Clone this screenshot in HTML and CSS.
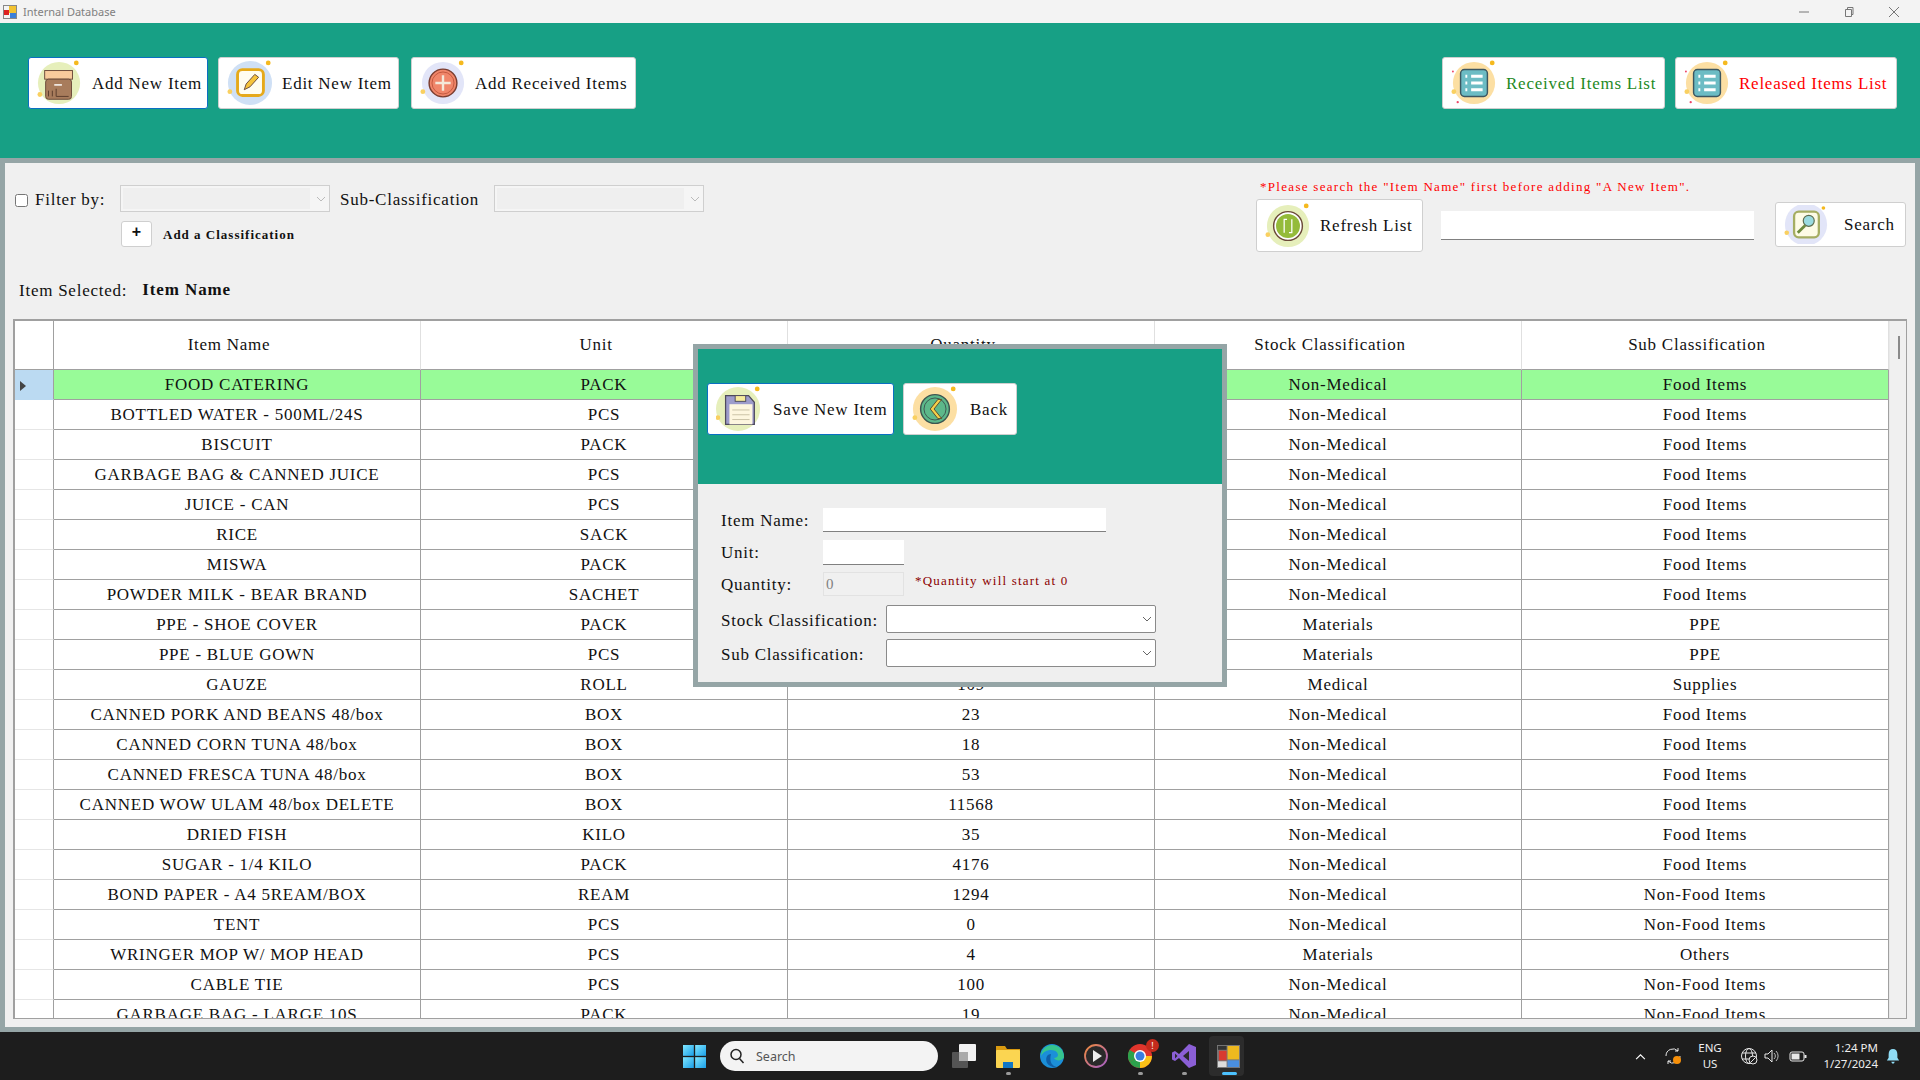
FILE: index.html
```html
<!DOCTYPE html>
<html lang="en">
<head>
<meta charset="utf-8">
<title>Internal Database</title>
<link rel="stylesheet" href="styles.css">
</head>
<body>
<div class="titlebar">
  <div class="title-left">
    <svg class="app-ico" viewBox="0 0 14 14"><rect x="0.5" y="0.5" width="13" height="13" fill="#f4f4f4" stroke="#888"/><rect x="1" y="5" width="5" height="5" fill="#d22"/><rect x="6" y="1" width="7" height="7" fill="#f2c230"/><rect x="7" y="8" width="6" height="5" fill="#3b7fd8"/></svg>
    <span class="title-text">Internal Database</span>
  </div>
  <div class="win-controls">
    <svg class="win-ico" viewBox="0 0 12 12"><path d="M1 6h10" stroke="#777" fill="none"/></svg>
    <svg class="win-ico" viewBox="0 0 12 12"><path d="M2.500 3.500h6v7h-6zM4.500 3.500v-2h5.500v7h-1.500" stroke="#777" fill="none"/></svg>
    <svg class="win-ico" viewBox="0 0 12 12"><path d="M1 1l10 10M11 1L1 11" stroke="#777" fill="none"/></svg>
  </div>
</div>

<header class="topbar">
  <div class="btn-group">
    <button class="btn btn-focus w-add"><svg class="ico" viewBox="0 0 48 48"><circle cx="23" cy="24" r="22" fill="#e6efbb"/><circle cx="41" cy="3" r="2.500" fill="#f5b91e"/><circle cx="3" cy="36" r="2.500" fill="#f9d061"/><rect x="8" y="11" width="29" height="9" fill="#f8cb9c" stroke="#6b4a3a"/><rect x="9" y="20" width="27" height="21" rx="3" fill="#a87c5c" stroke="#6b4a3a"/><path d="M18 26h8" stroke="#fff" stroke-width="1.500"/><path d="M12 38v-6M16 38v-6M20 30v8h13" stroke="#5b3d2c" fill="none"/></svg><span class="btn-label">Add New Item</span></button>
    <button class="btn w-edit"><svg class="ico" viewBox="0 0 48 48"><circle cx="24" cy="24" r="23" fill="#cfe0f5"/><circle cx="43" cy="3" r="2.500" fill="#f5b91e"/><circle cx="3" cy="33" r="2.500" fill="#f9d061"/><rect x="11" y="10" width="27" height="27" rx="5" fill="#fffdf0" stroke="#e6a91a" stroke-width="3"/><path d="M18 31l2-6 9-10 4 3-9 10z" fill="#f5c33b" stroke="#6b4a3a"/></svg><span class="btn-label">Edit New Item</span></button>
    <button class="btn w-recv"><svg class="ico" viewBox="0 0 48 48"><circle cx="24" cy="24" r="22" fill="#e2e5f8"/><circle cx="43" cy="3" r="2.500" fill="#f5b91e"/><circle cx="3" cy="33" r="2.500" fill="#f9d061"/><circle cx="24" cy="24" r="14.500" fill="#f0866a" stroke="#7a3d30" stroke-width="1.500"/><circle cx="24" cy="24" r="11.500" fill="none" stroke="#c2583f"/><path d="M24 16v16M16 24h16" stroke="#f4e8d8" stroke-width="2.500"/></svg><span class="btn-label">Add Received Items</span></button>
  </div>
  <div class="btn-group">
    <button class="btn w-rlist"><svg class="ico" viewBox="0 0 48 48"><circle cx="24" cy="24" r="22" fill="#fcdfa3"/><circle cx="43" cy="3" r="2.500" fill="#f5b91e"/><circle cx="3" cy="33" r="2.500" fill="#f9d061"/><circle cx="2" cy="12" r="1" fill="#ee4466"/><circle cx="7" cy="44" r="1.200" fill="#ee4466"/><rect x="10" y="10" width="28" height="28" rx="4" fill="#6cbcc4" stroke="#3c5660" stroke-width="1.500"/><path d="M21 17h12M21 24h12M21 31h12" stroke="#fff" stroke-width="3"/><path d="M15 17h2M15 24h2M15 31h2" stroke="#fff" stroke-width="3"/></svg><span class="btn-label txt-green">Received Items List</span></button>
    <button class="btn w-rel"><svg class="ico" viewBox="0 0 48 48"><circle cx="24" cy="24" r="22" fill="#fcdfa3"/><circle cx="43" cy="3" r="2.500" fill="#f5b91e"/><circle cx="3" cy="33" r="2.500" fill="#f9d061"/><circle cx="2" cy="12" r="1" fill="#ee4466"/><circle cx="7" cy="44" r="1.200" fill="#ee4466"/><rect x="10" y="10" width="28" height="28" rx="4" fill="#6cbcc4" stroke="#3c5660" stroke-width="1.500"/><path d="M21 17h12M21 24h12M21 31h12" stroke="#fff" stroke-width="3"/><path d="M15 17h2M15 24h2M15 31h2" stroke="#fff" stroke-width="3"/></svg><span class="btn-label txt-red">Released Items List</span></button>
  </div>
</header>

<main class="main">
  <section class="filters">
    <div class="filter-left">
      <div class="filter-row">
        <input type="checkbox" class="chk">
        <span class="lbl lbl-filter">Filter by:</span>
        <div class="combo combo-off"><span class="combo-fill"></span><svg class="chev" viewBox="0 0 10 6"><path d="M1 1l4 4 4-4" stroke="#bbb" fill="none"/></svg></div>
        <span class="lbl lbl-sub">Sub-Classification</span>
        <div class="combo combo-off"><span class="combo-fill"></span><svg class="chev" viewBox="0 0 10 6"><path d="M1 1l4 4 4-4" stroke="#bbb" fill="none"/></svg></div>
      </div>
      <div class="class-row">
        <button class="plus-btn">+</button>
        <span class="add-class">Add a Classification</span>
      </div>
      <div class="selected-row">
        <span class="lbl">Item Selected:</span>
        <strong class="selected-name">Item Name</strong>
      </div>
    </div>
    <div class="filter-right">
      <p class="note">*Please search the "Item Name" first before adding "A New Item".</p>
      <div class="search-row">
        <button class="btn w-refresh"><svg class="ico" viewBox="0 0 48 48"><circle cx="24" cy="24" r="22" fill="#e6efbb"/><circle cx="43" cy="3" r="2.500" fill="#f5b91e"/><circle cx="3" cy="33" r="2.500" fill="#f9d061"/><circle cx="24" cy="24" r="15" fill="#fff" stroke="#6b4a3a" stroke-width="1.500"/><circle cx="24" cy="24" r="12.500" fill="#94bb3a"/><path d="M20 31v-14h3M28 17v14h-3" stroke="#fff" fill="none" stroke-width="1.300"/></svg><span class="btn-label">Refresh List</span></button>
        <div class="txt-input search-input"></div>
        <button class="btn w-search"><svg class="ico ico-s" viewBox="0 0 48 48" preserveAspectRatio="xMidYMid slice"><circle cx="24" cy="24" r="23" fill="#e2e5f8"/><circle cx="43" cy="6" r="2" fill="#f5b91e"/><circle cx="3" cy="33" r="2.500" fill="#f9d061"/><rect x="11" y="10" width="27" height="28" rx="5" fill="#fdfbe6" stroke="#a5ad62" stroke-width="2.500"/><circle cx="27" cy="20" r="6" fill="#9adbe0" stroke="#5d6d50" stroke-width="1.300"/><path d="M23 25l-8 8" stroke="#6d8a3c" stroke-width="3"/></svg><span class="btn-label">Search</span></button>
      </div>
    </div>
  </section>

  <section class="grid">
    <div class="grid-body">
      <table class="tbl">
        <colgroup><col class="c0"><col class="c1"><col class="c1"><col class="c1"><col class="c1"><col class="c1"></colgroup>
        <thead><tr><th class="rh"></th><th>Item Name</th><th>Unit</th><th>Quantity</th><th>Stock Classification</th><th>Sub Classification</th></tr></thead>
        <tbody>
          <tr class="sel"><td class="rh rh-sel"><span class="arrow"></span></td><td>FOOD CATERING</td><td>PACK</td><td></td><td>Non-Medical</td><td>Food Items</td></tr>
          <tr><td class="rh"></td><td>BOTTLED WATER - 500ML/24S</td><td>PCS</td><td></td><td>Non-Medical</td><td>Food Items</td></tr>
          <tr><td class="rh"></td><td>BISCUIT</td><td>PACK</td><td></td><td>Non-Medical</td><td>Food Items</td></tr>
          <tr><td class="rh"></td><td>GARBAGE BAG &amp; CANNED JUICE</td><td>PCS</td><td></td><td>Non-Medical</td><td>Food Items</td></tr>
          <tr><td class="rh"></td><td>JUICE - CAN</td><td>PCS</td><td></td><td>Non-Medical</td><td>Food Items</td></tr>
          <tr><td class="rh"></td><td>RICE</td><td>SACK</td><td></td><td>Non-Medical</td><td>Food Items</td></tr>
          <tr><td class="rh"></td><td>MISWA</td><td>PACK</td><td></td><td>Non-Medical</td><td>Food Items</td></tr>
          <tr><td class="rh"></td><td>POWDER MILK - BEAR BRAND</td><td>SACHET</td><td></td><td>Non-Medical</td><td>Food Items</td></tr>
          <tr><td class="rh"></td><td>PPE - SHOE COVER</td><td>PACK</td><td></td><td>Materials</td><td>PPE</td></tr>
          <tr><td class="rh"></td><td>PPE - BLUE GOWN</td><td>PCS</td><td></td><td>Materials</td><td>PPE</td></tr>
          <tr><td class="rh"></td><td>GAUZE</td><td>ROLL</td><td>109</td><td>Medical</td><td>Supplies</td></tr>
          <tr><td class="rh"></td><td>CANNED PORK AND BEANS 48/box</td><td>BOX</td><td>23</td><td>Non-Medical</td><td>Food Items</td></tr>
          <tr><td class="rh"></td><td>CANNED CORN TUNA 48/box</td><td>BOX</td><td>18</td><td>Non-Medical</td><td>Food Items</td></tr>
          <tr><td class="rh"></td><td>CANNED FRESCA TUNA 48/box</td><td>BOX</td><td>53</td><td>Non-Medical</td><td>Food Items</td></tr>
          <tr><td class="rh"></td><td>CANNED WOW ULAM 48/box DELETE</td><td>BOX</td><td>11568</td><td>Non-Medical</td><td>Food Items</td></tr>
          <tr><td class="rh"></td><td>DRIED FISH</td><td>KILO</td><td>35</td><td>Non-Medical</td><td>Food Items</td></tr>
          <tr><td class="rh"></td><td>SUGAR - 1/4 KILO</td><td>PACK</td><td>4176</td><td>Non-Medical</td><td>Food Items</td></tr>
          <tr><td class="rh"></td><td>BOND PAPER - A4 5REAM/BOX</td><td>REAM</td><td>1294</td><td>Non-Medical</td><td>Non-Food Items</td></tr>
          <tr><td class="rh"></td><td>TENT</td><td>PCS</td><td>0</td><td>Non-Medical</td><td>Non-Food Items</td></tr>
          <tr><td class="rh"></td><td>WRINGER MOP W/ MOP HEAD</td><td>PCS</td><td>4</td><td>Materials</td><td>Others</td></tr>
          <tr><td class="rh"></td><td>CABLE TIE</td><td>PCS</td><td>100</td><td>Non-Medical</td><td>Non-Food Items</td></tr>
          <tr><td class="rh"></td><td>GARBAGE BAG - LARGE 10S</td><td>PACK</td><td>19</td><td>Non-Medical</td><td>Non-Food Items</td></tr>
        </tbody>
      </table>
    </div>
    <div class="scrollbar"><span class="thumb"></span></div>
  </section>

  <div class="modal">
    <div class="modal-head">
      <button class="btn btn-focus w-save"><svg class="ico" viewBox="0 0 48 48"><circle cx="23" cy="24" r="23" fill="#e6efbb"/><circle cx="43" cy="3" r="2.500" fill="#f5b91e"/><circle cx="2" cy="33" r="2.500" fill="#f9d061"/><path d="M10 10h24l6 7v23H10z" fill="#9d9ccb" stroke="#4e4a5c" stroke-width="1.300"/><rect x="20" y="10" width="11" height="6" fill="#f6ec9c" stroke="#4e4a5c"/><rect x="14" y="19" width="24" height="21" fill="#fdf6df"/><path d="M17 25h18M17 30h18M17 35h18" stroke="#c9c0a5"/></svg><span class="btn-label">Save New Item</span></button>
      <button class="btn w-back"><svg class="ico" viewBox="0 0 48 48"><circle cx="24" cy="24" r="23" fill="#fcdfa3"/><circle cx="43" cy="3" r="2.500" fill="#f5b91e"/><circle cx="3" cy="33" r="2.500" fill="#f9d061"/><circle cx="24" cy="24" r="15" fill="#5cb88a" stroke="#3c5650" stroke-width="1.500"/><circle cx="24" cy="24" r="11.500" fill="none" stroke="#3c5650"/><path d="M27 14l-8 10 8 10h4l-8-10 8-10z" fill="#f5d04a" stroke="#5c4a2a"/></svg><span class="btn-label">Back</span></button>
    </div>
    <div class="form">
      <div class="f-row r-name"><span class="lbl f-lbl">Item Name:</span><div class="txt-input in-name"></div></div>
      <div class="f-row r-unit"><span class="lbl f-lbl">Unit:</span><div class="txt-input in-unit"></div></div>
      <div class="f-row r-qty"><span class="lbl f-lbl">Quantity:</span><div class="in-qty">0</div><span class="qty-note">*Quantity will start at 0</span></div>
      <div class="f-row r-stock"><span class="lbl f-lbl2">Stock Classification:</span><div class="combo-on"><svg class="chev" viewBox="0 0 10 6"><path d="M1 1l4 4 4-4" stroke="#666" fill="none"/></svg></div></div>
      <div class="f-row r-sub"><span class="lbl f-lbl2">Sub Classification:</span><div class="combo-on"><svg class="chev" viewBox="0 0 10 6"><path d="M1 1l4 4 4-4" stroke="#666" fill="none"/></svg></div></div>
    </div>
  </div>
</main>

<footer class="taskbar">
  <div class="task-center">
    <svg class="tb-start" viewBox="0 0 24 24"><defs><linearGradient id="wg" x1="0" y1="0" x2="1" y2="1"><stop offset="0" stop-color="#7fe6ff"/><stop offset="1" stop-color="#1a9fe8"/></linearGradient></defs><rect width="11.300" height="11.300" fill="url(#wg)"/><rect x="12.700" width="11.300" height="11.300" fill="url(#wg)"/><rect y="12.700" width="11.300" height="11.300" fill="url(#wg)"/><rect x="12.700" y="12.700" width="11.300" height="11.300" fill="url(#wg)"/></svg>
    <div class="tb-search"><svg class="tb-mag" viewBox="0 0 16 16"><circle cx="7" cy="6.500" r="5" fill="none" stroke="#222" stroke-width="1.500"/><path d="M10.500 10.500l4 4.500" stroke="#222" stroke-width="1.500"/></svg><span class="tb-search-txt">Search</span></div>
    <div class="tb-item"><svg class="tb-ico" viewBox="0 0 24 24"><rect x="0" y="8" width="16" height="16" rx="1" fill="#555"/><rect x="7" y="0" width="17" height="17" rx="1" fill="#f2f2f2"/><rect x="7" y="8" width="9" height="9" fill="#aaa"/></svg></div>
    <div class="tb-item"><svg class="tb-ico" viewBox="0 0 24 24"><path d="M0 2h9l2 3h13v4H0z" fill="#d99a10"/><rect y="6" width="24" height="18" rx="1" fill="#fbd551"/><rect x="7" y="18" width="10" height="6" fill="#1277c4"/></svg><i class="dot"></i></div>
    <div class="tb-item"><svg class="tb-ico" viewBox="0 0 24 24"><circle cx="12" cy="12" r="12" fill="#1b8fd8"/><path d="M24 13c0-7-5-12-12-12C6 1 1 6 1 12c2-4 6-6 10-6 5 0 7 3 7 5 0 2-2 3-4 3 1 2 4 3 7 2 2-1 3-2 3-3z" fill="#36c58e"/><path d="M11 10c-4 0-6 4-4 9 2 3 6 5 10 4-5-1-8-5-6-13z" fill="#0f5fa8"/></svg></div>
    <div class="tb-item"><svg class="tb-ico" viewBox="0 0 24 24"><defs><linearGradient id="pg" x1="0" y1="0" x2="1" y2="1"><stop offset="0" stop-color="#f08a3c"/><stop offset="1" stop-color="#a45ec8"/></linearGradient></defs><circle cx="12" cy="12" r="11" fill="#2a2a2a" stroke="url(#pg)" stroke-width="1.800"/><path d="M9 6l9 6-9 6z" fill="#eee"/></svg></div>
    <div class="tb-item"><svg class="tb-ico" viewBox="0 0 24 24"><circle cx="12" cy="12" r="12" fill="#e0352c"/><path d="M12 12L1.600 18A12 12 0 0 0 12 24z" fill="#2ca24c"/><path d="M12 12v12A12 12 0 0 0 24 12z" fill="#fbc117"/><path d="M1.600 6A12 12 0 0 0 1.600 18L12 12z" fill="#2ca24c"/><circle cx="12" cy="12" r="6" fill="#fff"/><circle cx="12" cy="12" r="4.500" fill="#3a7ee0"/></svg><i class="dot"></i><span class="badge">!</span></div>
    <div class="tb-item"><svg class="tb-ico" viewBox="0 0 24 24"><path d="M17 0l7 3v18l-7 3-10-10-4 3-3-1.500v-7L3 7l4 3z" fill="#8b5fd6"/><path d="M17 7v10l-6-5z" fill="#2a2a2a"/><path d="M3 9.500v5l2.500-2.500z" fill="#2a2a2a"/></svg><i class="dot"></i></div>
    <div class="tb-item tb-active"><svg class="tb-ico tb-app" viewBox="0 0 24 24"><rect width="24" height="24" fill="#777"/><rect x="1" y="1" width="9" height="4" fill="#333"/><rect x="2" y="6" width="8" height="10" fill="#d83a30"/><rect x="11" y="1" width="12" height="14" fill="#eeb91f"/><rect x="11" y="16" width="12" height="7" fill="#4a8fe0"/><rect x="1" y="17" width="9" height="6" fill="#ddd"/></svg><i class="dot dot-active"></i></div>
  </div>
  <div class="tray">
    <svg class="tr-chev" viewBox="0 0 12 8"><path d="M1 7l5-5 5 5" stroke="#fff" stroke-width="1.300" fill="none"/></svg>
    <div class="tr-sync"><svg viewBox="0 0 18 18" class="tr-ico"><path d="M2 9a7 7 0 0 1 12-5M16 9a7 7 0 0 1-12 5" stroke="#e8e8e8" fill="none"/><path d="M14 1v3h-3M4 17v-3h3" stroke="#e8e8e8" fill="none"/><circle cx="13" cy="13" r="4" fill="#f79009"/></svg></div>
    <div class="tr-lang"><span>ENG</span><span>US</span></div>
    <svg viewBox="0 0 18 18" class="tr-ico tr-globe"><circle cx="9" cy="9" r="7.500" fill="none" stroke="#e8e8e8"/><ellipse cx="9" cy="9" rx="3.500" ry="7.500" fill="none" stroke="#e8e8e8"/><path d="M2 6h14M2 12h14" stroke="#e8e8e8"/><circle cx="13" cy="13" r="4" fill="#1e1e1e" stroke="#e8e8e8"/><path d="M10.500 15.500l5-5" stroke="#e8e8e8"/></svg>
    <svg viewBox="0 0 18 18" class="tr-ico tr-vol"><path d="M2 7h3l4-4v12l-4-4H2z" fill="none" stroke="#e8e8e8"/><path d="M11 6a4 4 0 0 1 0 6M13 4a7 7 0 0 1 0 10" fill="none" stroke="#bbb"/></svg>
    <svg viewBox="0 0 18 18" class="tr-ico tr-bat"><rect x="1" y="5" width="14" height="9" rx="2" fill="none" stroke="#e8e8e8"/><rect x="2.500" y="6.500" width="8" height="6" fill="#e8e8e8"/><rect x="15.500" y="8" width="2" height="3" fill="#e8e8e8"/></svg>
    <div class="tr-clock"><span>1:24 PM</span><span>1/27/2024</span></div>
    <svg viewBox="0 0 16 18" class="tr-bell"><path d="M8 1c-3 0-5 2-5 6v4l-2 3h14l-2-3V7c0-4-2-6-5-6z" fill="#8fdcf5"/><path d="M6 15.500h4l-1 2H7z" fill="#8fdcf5"/></svg>
  </div>
</footer>
</body>
</html>
```

FILE: styles.css
```css
* { box-sizing: border-box; }
html, body { margin: 0; padding: 0; }
body {
  width: 1920px;
  height: 1080px;
  overflow: hidden;
  display: flex;
  flex-direction: column;
  font-family: "Liberation Serif", serif;
  font-size: 17px;
  letter-spacing: 0.75px;
  color: #111;
  background: #f0f0f0;
  position: relative;
}

/* title bar */
.titlebar { height: 23px; flex: none; background: #f3f3f3; display: flex; justify-content: space-between; align-items: center; }
.title-left { display: flex; align-items: center; padding-left: 3px; }
.app-ico { width: 14px; height: 14px; }
.title-text { font-family: "Noto Sans", sans-serif; font-size: 11px; letter-spacing: 0; color: #808080; margin-left: 6px; }
.win-controls { display: flex; gap: 33px; padding-right: 20px; }
.win-ico { width: 12px; height: 12px; display: block; }

/* top teal bar */
.topbar { height: 135px; flex: none; background: #17a085; padding: 34px 23px 0 28px; display: flex; justify-content: space-between; align-items: flex-start; }
.btn-group { display: flex; gap: 10px; }
.btn {
  height: 52px; flex: none; display: flex; align-items: center; padding: 0 0 0 8px;
  background: #fff; border: 1px solid #cfcfcf; border-radius: 3px;
  font: inherit; letter-spacing: inherit; color: #111;
}
.btn-focus { border-color: #0a6fc2; }
.ico { width: 46px; height: 46px; flex: none; display: block; }
.ico-s { width: 44px; height: 39px; }
.btn-label { white-space: nowrap; margin-left: 9px; padding-top: 2px; }
.txt-green { color: #1f8a1f; }
.txt-red { color: #f00; }
.w-add { width: 180px; }
.w-edit { width: 181px; }
.w-recv { width: 225px; margin-left: 2px; }
.w-rlist { width: 223px; }
.w-rel { width: 222px; }
.w-save { width: 187px; }
.w-back { width: 114px; }
.w-back .btn-label { margin-left: 12px; }
.w-save .btn-label { margin-left: 11px; }
.w-refresh { width: 167px; height: 53px; }
.w-search { width: 131px; height: 45px; margin-top: 3px; }
.w-refresh .btn-label, .w-search .btn-label { padding-top: 0; }
.w-search .btn-label { margin-left: 16px; }

/* main */
.main { flex: 1; min-height: 0; border: solid #95a5a6; border-width: 5px; display: flex; flex-direction: column; }
.filters { height: 156px; flex: none; display: flex; justify-content: space-between; }
.filter-left { padding: 22px 0 0 10px; }
.filter-row { display: flex; align-items: center; height: 27px; }
.chk { width: 13px; height: 13px; margin: 3px 0 0; flex: none; }
.lbl { white-space: nowrap; padding-top: 2px; }
.lbl-filter { margin-left: 7px; width: 85px; }
.lbl-sub { margin: 0 10px; width: 144px; }
.combo { width: 210px; height: 27px; border: 1px solid #cfcfcf; background: #f5f5f5; display: flex; align-items: center; padding: 2px; }
.combo-fill { flex: 1; height: 100%; background: #efefef; }
.chev { width: 10px; height: 6px; margin: 0 3px 0 5px; flex: none; display: block; }
.combo-off .chev { margin: 0 1px 0 6px; }
.class-row { display: flex; align-items: center; height: 26px; margin: 9px 0 0 106px; }
.plus-btn { width: 31px; height: 26px; padding: 0 0 4px; background: #fff; border: 1px solid #cfcfcf; border-radius: 3px; font: bold 16px "Liberation Sans", sans-serif; color: #111; }
.add-class { margin-left: 11px; padding-top: 2px; font-size: 13px; font-weight: bold; letter-spacing: 1px; }
.selected-row { display: flex; align-items: center; margin: 33px 0 0 4px; height: 20px; }
.selected-name { margin-left: 15px; font-weight: bold; font-size: 17px; letter-spacing: 0.9px; }

.filter-right { padding-right: 8px; width: 659px; }
.note { margin: 16px 0 0 4px; height: 20px; font-size: 13px; letter-spacing: 1.3px; color: #f00; white-space: nowrap; }
.search-row { display: flex; align-items: flex-start; }
.txt-input { background: #fff; border-bottom: 1px solid #808080; }
.search-input { width: 313px; height: 29px; margin: 12px 21px 0 18px; }

/* grid */
.grid { height: 700px; flex: none; margin: 0 8px 0 8px; display: flex; border: solid #a0a0a0; border-width: 2px 1px 1px 2px; overflow: hidden; }
.grid-body { width: 1874px; flex: none; background: #fff; overflow: hidden; }
.tbl { width: 1874px; table-layout: fixed; border-collapse: separate; border-spacing: 0; }
.c0 { width: 39px; }
.c1 { width: 367px; }
.tbl th { height: 49px; font-weight: normal; padding: 0 16px 0 0; border-right: 1px solid #e0e0e0; border-bottom: 1px solid #a0a0a0; background: #fff; }
.tbl td { height: 30px; padding: 0; text-align: center; white-space: nowrap; border-right: 1px solid #a0a0a0; border-bottom: 1px solid #a0a0a0; background: #fff; }
.tbl th.rh { padding: 0; border-right: 1px solid #a0a0a0; }
.tbl td.rh { border-bottom-color: #e6e6e6; }
.tbl tr.sel td { background: #98fb98; }
.tbl tr.sel td.rh-sel { background: #bbdaf2; border-bottom-color: #bbdaf2; text-align: left; padding-left: 5px; }
.arrow { display: inline-block; border-left: 6px solid #444; border-top: 5px solid transparent; border-bottom: 5px solid transparent; vertical-align: middle; }
.scrollbar { flex: 1; background: #f0f0f0; border-left: 1px solid #e8e8e8; padding: 15px 0 0 8px; }
.thumb { display: block; width: 2px; height: 23px; background: #8a8a8a; }

/* modal */
.modal { position: absolute; left: 693px; top: 344px; width: 534px; height: 343px; border: 5px solid #95a5a6; background: #efefef; }
.modal-head { height: 135px; background: #17a085; padding: 34px 0 0 9px; display: flex; align-items: flex-start; gap: 9px; }
.form { padding: 24px 0 0 23px; }
.f-row { display: flex; align-items: center; }
.r-name { height: 24px; }
.r-unit { height: 25px; margin-top: 8px; }
.r-unit .lbl { padding-top: 0; }
.r-qty { height: 24px; margin-top: 7px; }
.r-stock { height: 28px; margin-top: 9px; }
.r-sub { height: 28px; margin-top: 6px; }
.f-lbl { width: 102px; }
.f-lbl2 { width: 165px; padding-top: 4px; }
.in-name { width: 283px; height: 24px; }
.in-unit { width: 81px; height: 25px; }
.in-qty { width: 81px; height: 24px; background: #f0f0f0; border: 1px solid #e2e2e2; padding-left: 2px; color: #808080; font-size: 15px; line-height: 22px; }
.qty-note { margin: -6px 0 0 11px; font-size: 13px; letter-spacing: 1.2px; color: #8b0000; white-space: nowrap; }
.combo-on { width: 270px; height: 28px; background: #fff; border: 1px solid #8a8a8a; border-radius: 2px; display: flex; justify-content: flex-end; align-items: center; }

/* taskbar */
.taskbar { height: 48px; flex: none; background: #1d1d1d; position: relative; display: flex; justify-content: flex-end; align-items: center; color: #eee; }
.task-center { position: absolute; left: 683px; top: 0; height: 48px; display: flex; align-items: center; }
.tb-start { width: 23px; height: 23px; }
.tb-search { width: 218px; height: 30px; margin-left: 14px; background: #f3f3f3; border-radius: 15px; display: flex; align-items: center; padding-left: 9px; }
.tb-mag { width: 16px; height: 16px; }
.tb-search-txt { font-family: "Noto Sans", sans-serif; font-size: 12.500px; letter-spacing: 0; color: #555; margin-left: 11px; }
.tb-item { width: 44px; height: 40px; display: flex; align-items: center; justify-content: center; position: relative; }
.tb-search + .tb-item { margin-left: 4px; }
.tb-ico { width: 24px; height: 24px; display: block; }
.tb-app { width: 23px; height: 23px; }
.tb-active { width: 35px; background: #2c2c2c; border-radius: 4px; margin-left: 3px; justify-content: flex-start; padding-left: 8px; }
.dot { position: absolute; left: 20px; bottom: 1px; width: 5px; height: 3px; background: #9a9a9a; border-radius: 2px; }
.dot-active { left: 13px; width: 15px; background: #4cc2ff; }
.badge { position: absolute; right: 3px; top: 3px; width: 13px; height: 13px; border-radius: 50%; background: #c42b1c; color: #fff; font: 9px/13px "Noto Sans", sans-serif; text-align: center; letter-spacing: 0; }
.tray { display: flex; align-items: center; height: 48px; font-family: "Noto Sans", sans-serif; letter-spacing: 0; font-size: 11.5px; padding-right: 20px; }
.tr-chev { width: 11px; height: 7px; margin-right: 18px; }
.tr-ico { width: 18px; height: 18px; display: block; }
.tr-lang { display: flex; flex-direction: column; align-items: center; line-height: 16px; width: 32px; margin: 0 14px 0 12px; }
.tr-vol { margin-left: 5px; }
.tr-bat { margin: 0 0 0 8px; }
.tr-clock { display: flex; flex-direction: column; align-items: flex-end; line-height: 16px; margin-left: 9px; width: 62px; }
.tr-bell { width: 14px; height: 16px; margin-left: 8px; }
```
